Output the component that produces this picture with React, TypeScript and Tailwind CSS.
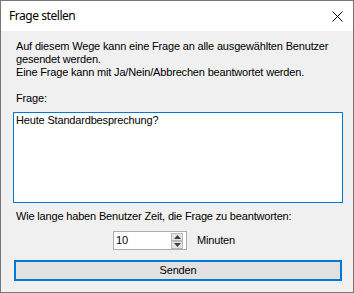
const body = { fontFamily: '"Liberation Sans", Arial, sans-serif' };

function SpinButton({ up }: { up?: boolean }) {
  return (
    <div className="flex h-[8px] w-[12px] items-center justify-center border border-[#b9b9b9] bg-[#e6e6e6]">
      <svg width="7" height="4" viewBox="0 0 7 4">
        {up ? (
          <polygon points="3.5,0 7,4 0,4" fill="#404040" />
        ) : (
          <polygon points="0,0 7,0 3.5,4" fill="#404040" />
        )}
      </svg>
    </div>
  );
}

export default function App() {
  return (
    <div className="flex h-[293px] w-[354px] flex-col border border-[#777777] bg-[#f0f0f0]">
      <div className="flex h-[30px] shrink-0 items-center justify-between bg-white pl-[8px] pr-[9px]">
        <span
          className="text-[12px] tracking-[-0.45px] text-black"
          style={{ fontFamily: '"Noto Sans", "Segoe UI", sans-serif' }}
        >
          Frage stellen
        </span>
        <svg width="11" height="11" viewBox="0 0 11 11" className="mr-[1px]">
          <path d="M0.5 0.5 L10.5 10.5 M10.5 0.5 L0.5 10.5" stroke="#000" strokeWidth="1" />
        </svg>
      </div>

      <div
        className="flex flex-col px-[12px] pt-[9px] text-[11px] leading-[13px] tracking-[-0.17px] text-black"
        style={body}
      >
        <p className="whitespace-nowrap px-[3px]">
          Auf diesem Wege kann eine Frage an alle ausgewählten Benutzer
          <br />
          gesendet werden.
          <br />
          Eine Frage kann mit Ja/Nein/Abbrechen beantwortet werden.
        </p>

        <p className="mt-[13px] px-[3px]">Frage:</p>

        <div className="mt-[7px] h-[91px] w-[330px] border border-[#0078d7] bg-white pl-[2px] pt-[1px]">
          Heute Standardbesprechung?
        </div>

        <p className="mt-[7px] px-[3px]">Wie lange haben Benutzer Zeit, die Frage zu beantworten:</p>

        <div className="mt-[8px] flex items-center pl-[100px]">
          <div className="flex h-[19px] w-[74px] items-center justify-between border border-[#adadad] bg-white pl-[2px] pr-[3px]">
            <span>10</span>
            <div className="flex flex-col">
              <SpinButton up />
              <SpinButton />
            </div>
          </div>
          <span className="ml-[10px]">Minuten</span>
        </div>

        <button
          type="button"
          className="ml-[1px] mt-[10px] flex h-[21px] w-[328px] items-center justify-center border-2 border-[#0078d7] bg-[#e1e1e1] text-black"
        >
          Senden
        </button>
      </div>
    </div>
  );
}
